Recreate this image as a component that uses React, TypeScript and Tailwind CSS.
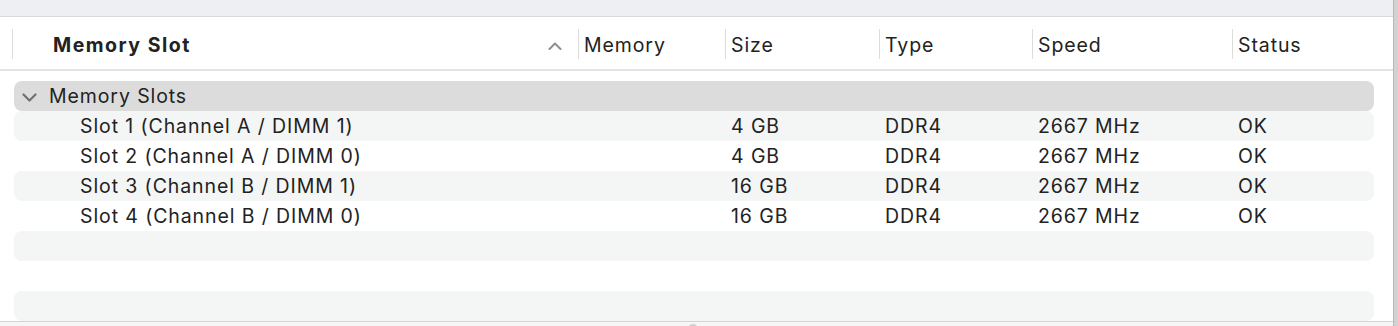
import React from 'react';

const rows = [
  { slot: 'Slot 1 (Channel A / DIMM 1)', size: '4 GB', type: 'DDR4', speed: '2667 MHz', status: 'OK' },
  { slot: 'Slot 2 (Channel A / DIMM 0)', size: '4 GB', type: 'DDR4', speed: '2667 MHz', status: 'OK' },
  { slot: 'Slot 3 (Channel B / DIMM 1)', size: '16 GB', type: 'DDR4', speed: '2667 MHz', status: 'OK' },
  { slot: 'Slot 4 (Channel B / DIMM 0)', size: '16 GB', type: 'DDR4', speed: '2667 MHz', status: 'OK' },
];

// column widths measured from the header separators
const cols = 'grid grid-cols-[564px_147px_154px_153px_200px_1fr]';

function ChevronUp() {
  return (
    <svg width="14" height="8" viewBox="0 0 14 8" fill="none">
      <path d="M1.5 7 L7 1.5 L12.5 7" stroke="#8e8e8e" strokeWidth="2" strokeLinecap="round" strokeLinejoin="round" />
    </svg>
  );
}

function ChevronDown() {
  return (
    <svg width="15" height="9" viewBox="0 0 15 9" fill="none">
      <path d="M1.5 1.5 L7.5 7.5 L13.5 1.5" stroke="#707070" strokeWidth="2.2" strokeLinecap="round" strokeLinejoin="round" />
    </svg>
  );
}

export default function App() {
  return (
    <div
      className="flex h-[326px] w-[1398px] overflow-hidden bg-white text-[19.5px] leading-none tracking-[0.9px] text-[#222222]"
      style={{ fontFamily: 'Inter, "Liberation Sans", sans-serif' }}
    >
      <div className="flex min-w-0 flex-1 flex-col">
        {/* top strip */}
        <div className="h-[17px] shrink-0 border-b border-[#d9d9dd] bg-[#eeeff3]" />

        {/* header */}
        <div className="grid h-[54px] shrink-0 grid-cols-[578px_147px_154px_153px_200px_1fr] items-center border-b-2 border-[#e4e4e4] pt-[2px]">
          <div className="ml-[12px] flex h-[30px] items-center border-l border-[#dcdcdc] pl-[40px] pr-[16px] pt-[3px]">
            <span className="flex-1 font-bold tracking-[1.5px]">Memory Slot</span>
            <ChevronUp />
          </div>
          {['Memory', 'Size', 'Type', 'Speed', 'Status'].map((h) => (
            <div key={h} className="flex h-[30px] items-center border-l border-[#dcdcdc] pl-[5px] pt-[3px]">
              {h}
            </div>
          ))}
        </div>

        {/* body */}
        <div className="flex flex-1 flex-col pl-[14px] pr-[19px] pt-[10px]">
          <div className="flex h-[30px] shrink-0 items-center rounded-[8px] bg-[#dcdcdc] pl-[8px] pt-[2px]">
            <ChevronDown />
            <span className="ml-[12px]">Memory Slots</span>
          </div>
          {rows.map((r, i) => (
            <div
              key={r.slot}
              className={`${cols} h-[30px] shrink-0 items-center rounded-[8px] pt-[2px] ${i % 2 === 0 ? 'bg-[#f4f5f5]' : 'bg-white'}`}
            >
              <div className="pl-[66px]">{r.slot}</div>
              <div />
              <div className="pl-[6px]">{r.size}</div>
              <div className="pl-[6px]">{r.type}</div>
              <div className="pl-[6px]">{r.speed}</div>
              <div className="pl-[6px]">{r.status}</div>
            </div>
          ))}
          <div className="h-[30px] shrink-0 rounded-[8px] bg-[#f4f5f5]" />
          <div className="h-[30px] shrink-0" />
          <div className="h-[30px] shrink-0 rounded-[8px] bg-[#f4f5f5]" />
        </div>

        {/* bottom split handle */}
        <div className="relative h-[8px] shrink-0 border-t border-[#d4d4d4] bg-[#f6f6f6]">
          <div className="absolute left-[688px] top-[2px] h-[10px] w-[10px] rounded-full bg-[#cfcfcf]" />
        </div>
      </div>

      {/* right window edge */}
      <div className="w-[5px] shrink-0 border-l border-[#b8b8b8] bg-[#d2d2d2]" />
    </div>
  );
}
